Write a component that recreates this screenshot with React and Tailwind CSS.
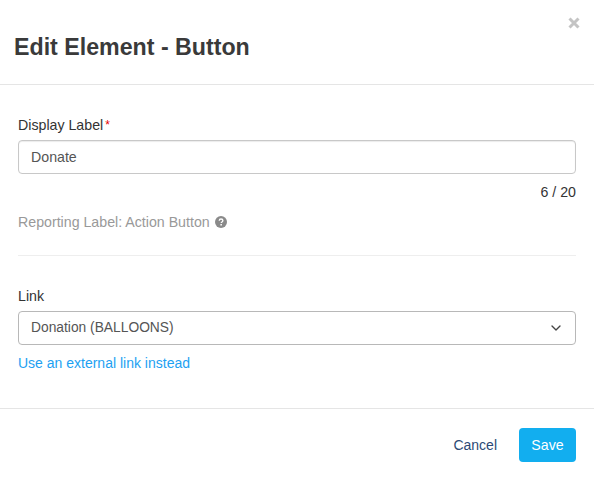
import { ChevronDown } from "lucide-react";

const EditElementModal = () => {
  return (
    <div className="w-[594px] h-[480px] bg-white font-['Liberation_Sans',Arial,sans-serif] text-[14.2px] overflow-hidden">
      {/* Header */}
      <div className="relative h-[85px] border-b border-[#e5e5e5] pl-[14px] pt-[32px]">
        <h3 className="text-[23.2px] leading-[31px] font-bold text-[#3a3a3a]">Edit Element - Button</h3>
        <button className="absolute right-[14px] top-[17px] text-[#c4c4c4]">
          <svg width="12" height="12" viewBox="0 0 12 12" className="block">
            <path d="M1.5 1.5L10.5 10.5M10.5 1.5L1.5 10.5" stroke="currentColor" strokeWidth="3" />
          </svg>
        </button>
      </div>

      {/* Body */}
      <div className="h-[324px] border-b border-[#e5e5e5] px-[18px] pt-[31px]">
        <label className="block h-[24px] leading-[18px] text-[#333333]">
          Display Label<span className="text-[#e60000] ml-[2px] relative -top-[1px] text-[12px]">*</span>
        </label>
        <div className="h-[34px] border border-[#c8c8c8] rounded-[4px] pl-[12px] pt-[1px] flex items-center text-[#555555] shadow-[inset_0_1px_1px_rgba(0,0,0,0.08)]">
          Donate
        </div>
        <div className="mt-[9px] text-right leading-[18px] text-[#333333]">6 / 20</div>
        <div className="mt-[12px] flex items-center gap-[5px] leading-[18px] text-[#999999]">
          Reporting Label: Action Button
          <svg width="12" height="12" viewBox="0 0 12 12" className="block">
            <circle cx="6" cy="6" r="6" fill="#8a8a8a" />
            <path d="M4.2 4.7C4.3 3.6 5 3 6 3C7.1 3 7.9 3.6 7.9 4.6C7.9 5.9 6.2 5.9 6.2 7.1" fill="none" stroke="white" strokeWidth="1.3" />
            <rect x="5.4" y="8" width="1.5" height="1.5" fill="white" />
          </svg>
        </div>
        <div className="mt-[24px] border-t border-[#eeeeee]"></div>
        <label className="block mt-[31px] h-[24px] leading-[18px] text-[#333333]">Link</label>
        <div className="h-[34px] border border-[#b8b8b8] rounded-[4px] px-[12px] flex items-center justify-between text-[13.8px] text-[#555555]">
          <span className="pt-[1px]">Donation (BALLOONS)</span>
          <ChevronDown size={16} strokeWidth={2} className="text-[#444444] -mr-[1px]" />
        </div>
        <a className="block mt-[9px] leading-[18px] text-[14px] text-[#1da1f2]">Use an external link instead</a>
      </div>

      {/* Footer */}
      <div className="flex justify-end items-center gap-[22px] px-[18px] pt-[19px]">
        <button className="text-[14px] text-[#2c4a75] leading-[18px]">Cancel</button>
        <button className="w-[57px] h-[34px] rounded-[4px] bg-[#12aeef] pt-[1px] text-white">Save</button>
      </div>
    </div>
  );
};

export default EditElementModal;
